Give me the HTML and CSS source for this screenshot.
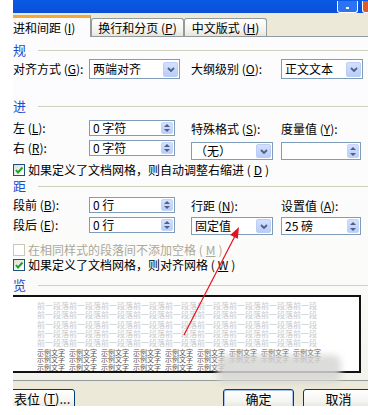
FILE: index.html
```html
<!DOCTYPE html>
<html>
	<head>
		<meta charset="utf-8">
		<title>段落</title>
		<link rel="stylesheet" href="styles.css">
	</head>
	<body>
		<div class="screen">
			<div class="dialog">
				<div class="titlebar">
					<div class="help"><span></span></div>
					<div class="close"></div>
				</div>
				<div class="tabs">
					<div class="tab on">进和间距 (<u>I</u>)</div>
					<div class="tab t2">换行和分页 (<u>P</u>)</div>
					<div class="tab t3">中文版式 (<u>H</u>)</div>
				</div>
				<div class="panel">
					<!-- 常规 -->
					<div class="group g1"><span>规</span><i></i></div>
					<div class="grid r1">
						<div class="lab">对齐方式 (<u>G</u>):</div>
						<div class="sel w91"><span>两端对齐</span><b><svg width="8" height="5" viewBox="0 0 8 5"><path d="M1 1 L4 4 L7 1" fill="none" stroke="#4d6185" stroke-width="1.8"/></svg></b></div>
						<div class="lab">大纲级别 (<u>O</u>):</div>
						<div class="sel w82"><span>正文文本</span><b><svg width="8" height="5" viewBox="0 0 8 5"><path d="M1 1 L4 4 L7 1" fill="none" stroke="#4d6185" stroke-width="1.8"/></svg></b></div>
					</div>

					<!-- 缩进 -->
					<div class="group g2"><span>进</span><i></i></div>
					<div class="grid r2">
						<div class="lab">左 (<u>L</u>):</div>
						<div class="spin"><span>0 字符</span><em><s class="up"></s><s class="dn"></s></em></div>
						<div class="lab end">特殊格式 (<u>S</u>):</div>
						<div class="lab end">度量值 (<u>Y</u>):</div>
						<div class="lab top">右 (<u>R</u>):</div>
						<div class="spin top"><span>0 字符</span><em><s class="up"></s><s class="dn"></s></em></div>
						<div class="sel w82 tall end"><span>（无）</span><b><svg width="8" height="5" viewBox="0 0 8 5"><path d="M1 1 L4 4 L7 1" fill="none" stroke="#4d6185" stroke-width="1.8"/></svg></b></div>
						<div class="spin w80 tall end"><span></span><em><s class="up"></s><s class="dn"></s></em></div>
					</div>
					<div class="check c1"><span class="box ok"><svg width="10" height="10" viewBox="0 0 10 10"><path d="M2 5 L4 7.5 L8.5 2.5" fill="none" stroke="#21a121" stroke-width="2"/></svg></span>如果定义了文档网格，则自动调整右缩进 (<u>D</u>)</div>

					<!-- 间距 -->
					<div class="group g3"><span>距</span><i></i></div>
					<div class="grid r3">
						<div class="lab">段前 (<u>B</u>):</div>
						<div class="spin"><span>0 行</span><em><s class="up"></s><s class="dn"></s></em></div>
						<div class="lab end">行距 (<u>N</u>):</div>
						<div class="lab end">设置值 (<u>A</u>):</div>
						<div class="lab top">段后 (<u>E</u>):</div>
						<div class="spin top"><span>0 行</span><em><s class="up"></s><s class="dn"></s></em></div>
						<div class="sel w82 tall top"><span>固定值</span><b><svg width="8" height="5" viewBox="0 0 8 5"><path d="M1 1 L4 4 L7 1" fill="none" stroke="#4d6185" stroke-width="1.8"/></svg></b></div>
						<div class="spin w80 tall top"><span>25 磅</span><em><s class="up"></s><s class="dn"></s></em></div>
					</div>
					<div class="check c2 off"><span class="box"></span>在相同样式的段落间不添加空格 (<u>M</u>)</div>
					<div class="check c3"><span class="box ok"><svg width="10" height="10" viewBox="0 0 10 10"><path d="M2 5 L4 7.5 L8.5 2.5" fill="none" stroke="#21a121" stroke-width="2"/></svg></span>如果定义了文档网格，则对齐网格 (<u>W</u>)</div>

					<!-- 预览 -->
					<div class="group g4"><span>览</span><i></i></div>
					<div class="preview">
						<div class="faint">前一段落前一段落前一段落前一段落前一段落前一段落前一段落前一段落前一段</div>
						<div class="faint">前一段落前一段落前一段落前一段落前一段落前一段落前一段落前一段落前一段</div>
						<div class="faint">前一段落前一段落前一段落前一段落前一段落前一段落前一段落前一段落前一段</div>
						<div class="faint">前一段落前一段落前一段落前一段落前一段落前一段落前一段落前一段落前一段</div>
						<div class="faint">前一段落前一段落前一段落前一段落前一段落前一段落前一段落前一段落前一段</div>
						<div class="sample first"><span>示例文字</span><span>示例文字</span><span>示例文字</span><span>示例文字</span><span>示例文字</span><span>示例文字</span><span>示例文字</span><span>示例文字</span><span>示例文字</span></div>
						<div class="sample"><span>示例文字</span><span>示例文字</span><span>示例文字</span><span>示例文字</span><span>示例文字</span><span>示例文字</span><span>示例文字</span><span>示例文字</span><span>示例文字</span></div>
						<div class="sample"><span>示例文字</span><span>示例文字</span><span>示例文字</span><span>示例文字</span><span>示例文字</span><span>示例文字</span></div>
					</div>
				</div>
				<div class="footer">
					<div class="btn tabpos">表位 (<u>T</u>)...</div>
					<div class="btn def">确定</div>
					<div class="btn">取消</div>
				</div>
			</div>

			<!-- 水印模糊块 -->
			<div class="blur"></div>

			<!-- 红色箭头 -->
			<svg class="arrow" width="368" height="415" viewBox="0 0 368 415">
				<line x1="184" y1="335" x2="235" y2="236" stroke="#e8101e" stroke-width="1.2"/>
				<polygon points="239,227 237.8,238.8 230.2,235" fill="#e8101e"/>
			</svg>
		</div>
	</body>
</html>
```

FILE: styles.css
```css
body{margin: 0;background: #fff;}
.screen{
	width: 368px;
	height: 415px;
	overflow: hidden;
	position: relative;
	font-family: "Noto Sans CJK SC", "DejaVu Sans", sans-serif;
	font-size: 12px;
	color: #000;
}
u{text-decoration: underline;}
.dialog{
	width: 380px;
	height: 406px;
	margin-left: 13px;
	overflow: hidden;
	background: #ece9d8;
}

/* 标题栏 */
.titlebar{
	height: 13px;
	background: linear-gradient(#0a5ae6, #0a4fd6);
	display: flex;
	align-items: flex-end;
	padding-left: 324px;
	gap: 4px;
	box-sizing: border-box;
}
.help{
	width: 21px;
	height: 12px;
	border: 1px solid #fff;
	border-top: none;
	border-radius: 0 0 3px 3px;
	background: #2d72f0;
	box-sizing: border-box;
	display: flex;
	justify-content: center;
	align-items: flex-end;
	padding-bottom: 3px;
}
.help span{width: 3px;height: 2px;background: #fff;}
.close{
	width: 21px;
	height: 12px;
	border: 1px solid #fff;
	border-top: none;
	border-radius: 0 0 3px 3px;
	background: #de5a2f;
	box-sizing: border-box;
}

/* 选项卡 */
.tabs{
	height: 23px;
	display: flex;
	align-items: flex-end;
	line-height: 17px;
}
.tab{
	height: 18px;
	box-sizing: border-box;
	border: 1px solid #919b9c;
	border-bottom: none;
	border-radius: 3px 3px 0 0;
	background: linear-gradient(#ffffff, #f3f2ec 70%, #e6e4da);
	text-align: center;
	white-space: nowrap;
}
.tab.on{
	width: 78px;
	height: 22px;
	margin-bottom: -1px;
	border-left: none;
	border-top: 3px solid #f3a93a;
	border-radius: 0;
	background: #fcfcfe;
	text-align: left;
	line-height: 19px;
	position: relative;
	z-index: 1;
}
.t2{width: 93px;}
.t3{width: 83px;}

/* 内容面板 */
.panel{
	height: 343px;
	border-top: 1px solid #919b9c;
	border-bottom: 1px solid #919b9c;
	background: linear-gradient(#fcfcfe, #fbfbfa 70%, #f3f2ec);
	display: flex;
	flex-direction: column;
}
.group{
	height: 14px;
	display: flex;
	align-items: center;
	color: #1a4ccf;
	line-height: 14px;
	font-size: 13px;
}
.group i{flex: 1;height: 1px;background: #d0d0bf;margin-left: 12px;}
.g1{margin-top: 6px;}
.g2{margin-top: 20px;}
.g3{margin-top: 3px;}
.g4{margin-top: 7px;}

.grid{
	display: grid;
	grid-template-columns: 76px 102px 90px 90px;
	white-space: nowrap;
}
.r1{height: 20px;margin-top: 2px;align-items: center;}
.r2{margin-top: 7px;grid-template-rows: 16px 20px;row-gap: 4px;align-items: center;}
.r3{margin-top: 4px;grid-template-rows: 16px 20px;row-gap: 4px;align-items: center;}
.lab{line-height: 14px;}
.end{align-self: end;}
.top{align-self: start;}
.lab.top{line-height: 16px;}

/* 下拉框 */
.sel{
	height: 20px;
	box-sizing: border-box;
	border: 1px solid #7f9db9;
	background: #fff;
	display: flex;
	align-items: center;
	justify-content: space-between;
	padding-left: 3px;
	padding-right: 1px;
}
.sel span{line-height: 16px;}
.sel b{
	width: 15px;
	height: 15px;
	box-sizing: border-box;
	border: 1px solid #bccdf6;
	border-radius: 2px;
	background: linear-gradient(#d4e0fd, #b9cdf9);
	display: flex;
	align-items: center;
	justify-content: center;
}
.sel.tall{height: 18px;}
.sel.tall b{height: 14px;}
.w91{width: 91px;}
.w82{width: 82px;}

/* 微调框 */
.spin{
	width: 86px;
	height: 16px;
	box-sizing: border-box;
	border: 1px solid #7f9db9;
	background: #fff;
	display: flex;
	align-items: center;
	justify-content: space-between;
	padding-left: 3px;
	padding-right: 1px;
}
.spin span{line-height: 14px;}
.spin em{
	width: 12px;
	height: 12px;
	display: flex;
	flex-direction: column;
	background: linear-gradient(#d4e0fd, #b9cdf9);
	border: 1px solid #c5d4f7;
	border-radius: 2px;
	box-sizing: border-box;
	align-items: center;
	justify-content: space-around;
}
.spin s{width: 0;height: 0;border-left: 3px solid transparent;border-right: 3px solid transparent;}
.spin s.up{border-bottom: 3px solid #4d6185;}
.spin s.dn{border-top: 3px solid #4d6185;}
.spin.w80{width: 80px;}
.spin.tall{height: 18px;}
.spin.tall em{height: 14px;}

/* 复选框 */
.check{
	height: 13px;
	display: flex;
	align-items: center;
	gap: 3px;
	white-space: nowrap;
	line-height: 13px;
}
.box{
	width: 12px;
	height: 12px;
	flex: none;
	box-sizing: border-box;
	border: 1px solid #1c5180;
	background: linear-gradient(135deg, #dcdcd7, #fff);
	display: flex;
	align-items: center;
	justify-content: center;
}
.c1{margin-top: 3px;}
.c2{margin-top: 6px;color: #aca899;}
.c2 .box{border-color: #cac8bb;background: #fff;}
.c3{margin-top: 2px;}

/* 预览框 */
.preview{
	margin-top: 3px;
	margin-left: -2px;
	width: 350px;
	height: 78px;
	box-sizing: border-box;
	border: 2px solid #111;
	background: #fff;
	padding: 4px 0 0 24px;
	overflow: hidden;
}
.faint{
	height: 9.25px;
	white-space: nowrap;
	font-size: 8px;
	line-height: 9.25px;
	color: #c8c8c8;
}
.sample{
	height: 7.5px;
	display: flex;
	gap: 4px;
	white-space: nowrap;
	font-size: 7px;
	line-height: 7.5px;
	color: #555;
}
.sample.first{margin-top: 1.25px;}

/* 底部按钮 */
.footer{
	height: 25px;
	display: flex;
	gap: 9px;
	padding-top: 8px;
	padding-right: 19px;
	box-sizing: border-box;
}
.btn{
	width: 71px;
	height: 21px;
	flex: none;
	box-sizing: border-box;
	border: 1px solid #003c74;
	border-radius: 3px;
	background: linear-gradient(#ffffff, #f4f4f0 60%, #e3e0d6);
	text-align: center;
	padding-top: 1px;
	line-height: 15px;
	font-size: 13px;
}
.tabpos{width: 73px;margin-left: -11px;padding-left: 11px;text-align: left;}
.def{margin-left: auto;box-shadow: inset 0 0 0 1px #a9c2f0;}

.blur{
	position: absolute;
	left: 217px;
	top: 355px;
	width: 124px;
	height: 28px;
	border-radius: 8px;
	background: rgba(214,214,212,0.85);
	filter: blur(3px);
}
.arrow{position: absolute;left: 0;top: 0;}
```
